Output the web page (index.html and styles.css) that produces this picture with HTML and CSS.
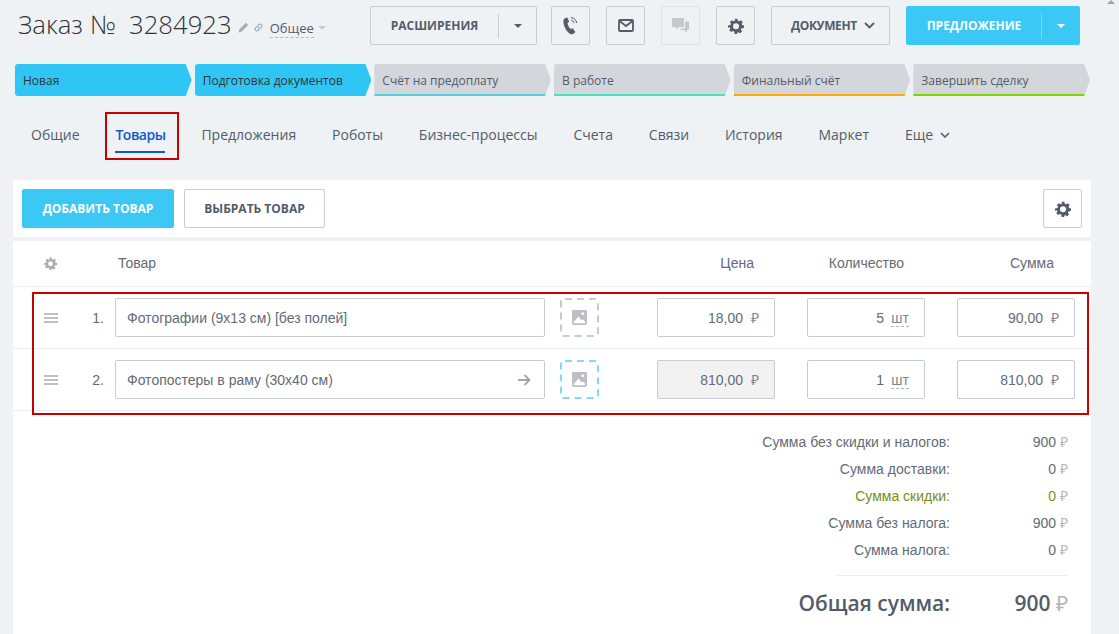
FILE: index.html
```html
<!DOCTYPE html>
<html lang="ru">

<head>
    <meta charset="UTF-8" />
    <meta name="viewport" content="width=device-width, initial-scale=1.0" />
    <title>Заказ № 3284923</title>
    <link rel="stylesheet" href="styles.css">
</head>

<body>
    <svg class="sprite" width="0" height="0">
        <symbol id="gear" viewBox="0 0 24 24">
            <path d="M10 1h4l.7 3.1 1.9.8 2.7-1.7 2.8 2.8-1.7 2.7.8 1.9L24 11.3v3.4l-3.8.9-.8 1.9 1.7 2.7-2.8 2.8-2.7-1.7-1.9.8L14 24h-4l-.7-3.8-1.9-.8-2.7 1.7-2.8-2.8 1.7-2.7-.8-1.9L0 14.7v-3.4l3.8-.7.8-1.9L2.9 6l2.8-2.8 2.7 1.7 1.9-.8zM12 8a4.500 4.500 0 1 0 0 9 4.500 4.500 0 0 0 0-9z" fill-rule="evenodd" />
        </symbol>
        <symbol id="picture" viewBox="0 0 16 16">
            <path d="M1.500 0h13A1.500 1.500 0 0 1 16 1.500v13a1.500 1.500 0 0 1-1.500 1.500h-13A1.500 1.500 0 0 1 0 14.500v-13A1.500 1.500 0 0 1 1.500 0zM11.500 2.500a1.500 1.500 0 1 0 0 3 1.500 1.500 0 0 0 0-3zM2 14h12v-1.500l-2.500-2.500-1.500 1-3-4-5 5.500z" fill-rule="evenodd" />
        </symbol>
    </svg>

    <header class="top">
        <div class="title-block">
            <h1 class="title">Заказ №&nbsp; 3284923</h1>
            <svg class="mini-icon" width="11" height="11" viewBox="0 0 11 11"><path d="M8 .8l2.200 2.200-6.700 6.700L.6 10.400l.7-2.900z" /></svg>
            <svg class="link-icon" width="11" height="11" viewBox="0 0 12 12"><path d="M5 7l2-2M4.700 4.500L6.500 2.700a2 2 0 0 1 2.800 2.800L7.500 7.300M7.300 7.500L5.500 9.300a2 2 0 0 1-2.800-2.800l1.800-1.800" /></svg>
            <span class="category">Общее</span>
            <span class="caret caret-light"></span>
        </div>
        <div class="actions">
            <button class="btn btn-split" type="button">
                <span class="btn-split-label">Расширения</span>
                <span class="btn-split-arrow"><span class="caret caret-dark"></span></span>
            </button>
            <button class="btn btn-icon" type="button">
                <svg width="18" height="20" viewBox="0 0 18 20"><path class="icon-fill" d="M2.800 2.300L5.300 1.400 7.200 5.800 5.500 7.100c.2 2 1.400 4.500 3.300 6l1.900-.8 2.700 3.600-2 1.900c-1 .8-2.500.6-3.600-.1C4.500 15.400 1.800 10.500 1.400 6c-.1-1.500.3-3 1.400-3.700z" /><path class="icon-line" d="M9 1.500c3 .3 5.300 2.500 5.700 5.500M9.200 4.300c1.500.2 2.600 1.300 2.800 2.800" /></svg>
            </button>
            <button class="btn btn-icon" type="button">
                <svg width="16" height="13" viewBox="0 0 16 13"><rect class="icon-line icon-line-thick" x="1" y="1" width="14" height="11" rx="1" /><path class="icon-line icon-line-thick" d="M1.500 2l6.500 5 6.500-5" /></svg>
            </button>
            <button class="btn btn-icon btn-off" type="button">
                <svg width="17" height="16" viewBox="0 0 17 16"><path d="M1 0h10a1 1 0 0 1 1 1v7a1 1 0 0 1-1 1H7l-3 2.500V9H1a1 1 0 0 1-1-1V1a1 1 0 0 1 1-1z" /><path d="M13 3.500h3a1 1 0 0 1 1 1V11a1 1 0 0 1-1 1h-1v3l-3-3H8l1-1.500h3a1 1 0 0 0 1-1z" /></svg>
            </button>
            <button class="btn btn-icon" type="button">
                <svg class="gear-dark" width="16" height="16"><use href="#gear" /></svg>
            </button>
            <button class="btn btn-doc" type="button">
                Документ
                <svg width="11" height="7" viewBox="0 0 11 7"><path class="icon-line icon-line-thick" d="M1 1l4.500 4.500L10 1" /></svg>
            </button>
            <button class="btn btn-primary btn-offer" type="button">
                <span class="btn-offer-label">Предложение</span>
                <span class="btn-offer-arrow"><span class="caret caret-white"></span></span>
            </button>
        </div>
    </header>

    <div class="stages">
        <div class="stage stage-done">Новая</div>
        <div class="stage stage-done">Подготовка документов</div>
        <div class="stage stage-cyan">Счёт на предоплату</div>
        <div class="stage stage-teal">В работе</div>
        <div class="stage stage-orange">Финальный счёт</div>
        <div class="stage stage-green">Завершить сделку</div>
    </div>

    <nav class="tabs">
        <a class="tab">Общие</a>
        <a class="tab tab-active">Товары<span class="mark-tab"></span></a>
        <a class="tab">Предложения</a>
        <a class="tab">Роботы</a>
        <a class="tab">Бизнес-процессы</a>
        <a class="tab">Счета</a>
        <a class="tab">Связи</a>
        <a class="tab">История</a>
        <a class="tab">Маркет</a>
        <a class="tab">Еще
            <svg class="tab-more" width="10" height="6" viewBox="0 0 10 6"><path d="M1 1l4 4 4-4" /></svg>
        </a>
    </nav>

    <section class="toolbar">
        <button class="btn btn-primary btn-add" type="button">Добавить товар</button>
        <button class="btn btn-choose" type="button">Выбрать товар</button>
        <button class="btn btn-settings" type="button">
            <svg class="gear-dark" width="16" height="16"><use href="#gear" /></svg>
        </button>
    </section>

    <section class="products">
        <div class="row row-head">
            <div class="col-handle"><svg class="gear-light" width="13" height="13"><use href="#gear" /></svg></div>
            <div class="col-num"></div>
            <div class="col-name head-name">Товар</div>
            <div class="col-pic"></div>
            <div class="col-price head-cell">Цена</div>
            <div class="col-qty head-cell">Количество</div>
            <div class="col-sum head-cell">Сумма</div>
        </div>

        <div class="lines">
            <span class="mark-lines"></span>
            <div class="row row-line">
                <div class="col-handle"><span class="handle"></span></div>
                <div class="col-num">1.</div>
                <div class="col-name field">Фотографии (9х13 см) [без полей]</div>
                <div class="col-pic">
                    <svg class="pic-box" width="39" height="39" viewBox="0 0 39 39"><rect x="1" y="1" width="37" height="37" rx="2" /></svg>
                    <svg class="pic-icon" width="15" height="15"><use href="#picture" /></svg>
                </div>
                <div class="col-price field field-num">18,00<span class="unit rub">₽</span></div>
                <div class="col-qty field field-num">5<span class="unit measure">шт</span></div>
                <div class="col-sum field field-num">90,00<span class="unit rub">₽</span></div>
            </div>
            <div class="row row-line">
                <div class="col-handle"><span class="handle"></span></div>
                <div class="col-num">2.</div>
                <div class="col-name field field-arrow">Фотопостеры в раму (30х40 см)
                    <svg width="14" height="12" viewBox="0 0 14 12"><path d="M1 6h11.500M7.500 1l5 5-5 5" /></svg>
                </div>
                <div class="col-pic">
                    <svg class="pic-box pic-box-blue" width="39" height="39" viewBox="0 0 39 39"><rect x="1" y="1" width="37" height="37" rx="2" /></svg>
                    <svg class="pic-icon" width="15" height="15"><use href="#picture" /></svg>
                </div>
                <div class="col-price field field-num field-off">810,00<span class="unit rub">₽</span></div>
                <div class="col-qty field field-num">1<span class="unit measure">шт</span></div>
                <div class="col-sum field field-num">810,00<span class="unit rub">₽</span></div>
            </div>
        </div>

        <div class="totals">
            <div class="total-row"><span class="total-label">Сумма без скидки и налогов:</span><span class="total-value">900 <i>₽</i></span></div>
            <div class="total-row"><span class="total-label">Сумма доставки:</span><span class="total-value">0 <i>₽</i></span></div>
            <div class="total-row total-discount"><span class="total-label">Сумма скидки:</span><span class="total-value">0 <i>₽</i></span></div>
            <div class="total-row"><span class="total-label">Сумма без налога:</span><span class="total-value">900 <i>₽</i></span></div>
            <div class="total-row"><span class="total-label">Сумма налога:</span><span class="total-value">0 <i>₽</i></span></div>
            <div class="total-row total-grand"><span class="total-label">Общая сумма:</span><span class="total-value">900 <i>₽</i></span></div>
        </div>
    </section>

    <div class="scroll-stub"></div>
</body>

</html>
```

FILE: styles.css
```css
* {
  box-sizing: border-box;
}

html,
body {
  height: 100%;
}

body {
  margin: 0;
  overflow: hidden;
  background-color: #eef2f4;
  color: #535c69;
  font-family: 'Open Sans', sans-serif;
  position: relative;
}

.sprite {
  position: absolute;
}

/* header */
.top {
  display: flex;
  justify-content: space-between;
  height: 45px;
  padding: 6px 39px 0 18px;
}

.title-block {
  display: flex;
  align-items: center;
  height: 38px;
}

.title {
  margin: 0 6px 0 0;
  font-size: 25.700px;
  font-weight: 300;
  color: #333;
  white-space: nowrap;
  line-height: 38px;
}

.mini-icon {
  fill: #a8adb4;
  margin-right: 4px;
  margin-top: 4px;
}

.link-icon {
  fill: none;
  stroke: #a8adb4;
  stroke-width: 1.300;
  margin-right: 6px;
  margin-top: 4px;
}

.category {
  font-size: 13px;
  line-height: 17px;
  margin-top: 7px;
  border-bottom: 1px dashed #b5bac0;
  margin-right: 4px;
}

.caret {
  display: inline-block;
  border-left: 4px solid transparent;
  border-right: 4px solid transparent;
  border-top: 4px solid #535c69;
}

.caret-light {
  border-top-color: #c6cbd0;
  margin-top: 6px;
}

.caret-white {
  border-top-color: #fff;
}

.actions {
  display: flex;
  gap: 16px;
}

.btn {
  height: 39px;
  padding: 0;
  border: 1px solid #c6cdd3;
  border-radius: 2px;
  background: transparent;
  color: #535c69;
  font-family: 'Open Sans', sans-serif;
  font-size: 12px;
  font-weight: 700;
  text-transform: uppercase;
  display: flex;
  align-items: center;
  justify-content: center;
}

.btn-split {
  width: 167px;
  margin-right: -2px;
}

.btn-split-label {
  width: 128px;
  border-right: 1px solid #c6cdd3;
  line-height: 24px;
}

.btn-split-arrow {
  flex: 1;
  display: flex;
  justify-content: center;
}

.btn-icon {
  width: 39px;
}

.btn-off {
  border-color: #dfe3e6;
}

.btn-off svg {
  fill: #c4c8cd;
}

.icon-fill {
  fill: #535c69;
}

.icon-line {
  fill: none;
  stroke: #535c69;
  stroke-width: 1;
}

.icon-line-thick {
  stroke-width: 1.800;
}

.gear-dark {
  fill: #535c69;
}

.gear-light {
  fill: #a8adb4;
}

.btn-doc {
  width: 119px;
  gap: 7px;
  padding-left: 19px;
  justify-content: flex-start;
  letter-spacing: -0.4px;
}

.btn-primary {
  background-color: #3bc8f5;
  border-color: #3bc8f5;
  color: #fff;
}

.btn-offer {
  width: 174px;
}

.btn-offer-label {
  width: 135px;
  border-right: 1px solid #7adaf8;
  line-height: 26px;
}

.btn-offer-arrow {
  flex: 1;
  display: flex;
  justify-content: center;
}

/* stages */
.stages {
  display: flex;
  gap: 3px;
  margin: 19px 0 0 15px;
  width: 1075px;
}

.stage {
  flex: 1;
  height: 32px;
  padding-left: 8px;
  background-color: #d3d6da;
  border-radius: 3px 0 0 3px;
  font-size: 12px;
  line-height: 34px;
  clip-path: polygon(0 0, calc(100% - 6px) 0, 100% 50%, calc(100% - 6px) 100%, 0 100%);
  position: relative;
}

.stage::after {
  content: "";
  position: absolute;
  left: 0;
  right: 5px;
  bottom: 0;
  height: 2px;
}

.stage-done {
  background-color: #2fc6f6;
  color: #333;
}

.stage-cyan::after {
  background-color: #55d0e0;
}

.stage-teal::after {
  background-color: #47e4c2;
}

.stage-orange::after {
  background-color: #ffa900;
}

.stage-green::after {
  background-color: #7bd500;
}

/* tabs */
.tabs {
  display: flex;
  gap: 35.900px;
  height: 84px;
  padding: 29px 0 0 31px;
}

.tab {
  font-size: 14px;
  line-height: 20px;
  white-space: nowrap;
  position: relative;
}

.tab-active {
  color: #1058d0;
  font-weight: 600;
  letter-spacing: -0.5px;
}

.tab-active::after {
  content: "";
  position: absolute;
  left: 0;
  right: 0;
  top: 26px;
  height: 2px;
  background-color: #1058d0;
}

.mark-tab {
  position: absolute;
  left: -10px;
  top: -13px;
  width: 74px;
  height: 48px;
  border: 2px solid #c90000;
}

.tab-more {
  fill: none;
  stroke: #535c69;
  stroke-width: 1.500;
  margin-left: 3px;
  vertical-align: 2px;
}

/* toolbar */
.toolbar {
  display: flex;
  align-items: center;
  gap: 10px;
  height: 57px;
  margin: 0 28px 4px 13px;
  padding: 0 9px 0 9px;
  background-color: #fff;
}

.btn-add {
  width: 152px;
}

.btn-choose {
  width: 141px;
}

.btn-settings {
  width: 39px;
  margin-left: auto;
}

/* products */
.products {
  margin: 0 28px 0 13px;
  height: 400px;
  background-color: #fff;
  color: #636b77;
  font-family: 'Liberation Sans', sans-serif;
  font-size: 14px;
}

.row {
  display: flex;
  align-items: center;
  border-bottom: 1px solid #edeef0;
}

.row-head {
  height: 46px;
  padding-bottom: 1px;
}

.row-line {
  height: 62px;
}

.col-handle {
  width: 62px;
  display: flex;
  padding-left: 31px;
}

.col-num {
  width: 29px;
  text-align: right;
  margin-right: 11px;
}

.col-name {
  width: 430px;
  margin-right: 15px;
}

.head-name {
  padding-left: 3px;
}

.col-pic {
  width: 39px;
  height: 39px;
  margin-right: 58px;
  position: relative;
  display: flex;
  align-items: center;
  justify-content: center;
}

.col-price,
.col-qty,
.col-sum {
  width: 118px;
  margin-right: 32px;
}

.col-sum {
  margin-right: 0;
}

.head-cell {
  text-align: right;
  padding-right: 21px;
}

.handle {
  width: 14px;
  height: 10px;
  border-top: 2px solid #bcc0c5;
  border-bottom: 2px solid #bcc0c5;
  position: relative;
}

.handle::after {
  content: "";
  position: absolute;
  left: 0;
  right: 0;
  top: 2px;
  height: 2px;
  background-color: #bcc0c5;
}

.lines {
  position: relative;
}

.mark-lines {
  position: absolute;
  left: 19px;
  top: 5px;
  width: 1057px;
  height: 123px;
  border: 2px solid #c90000;
  pointer-events: none;
}

.field {
  height: 39px;
  border: 1px solid #c6cdd3;
  border-radius: 2px;
  display: flex;
  align-items: center;
  padding: 0 11px;
}

.field-num {
  justify-content: flex-end;
  padding: 0 7px 0 0;
}

.field-off {
  background-color: #f2f2f3;
}

.field-arrow {
  justify-content: space-between;
  padding-right: 13px;
}

.field-arrow svg {
  fill: none;
  stroke: #a0a5ab;
  stroke-width: 1.800;
}

.unit {
  margin-left: 7px;
  min-width: 10px;
  text-align: center;
}

.rub {
  color: #80868e;
  margin-right: 7px;
}

.measure {
  color: #80868e;
  min-width: 18px;
  margin-right: 8px;
  border-bottom: 1px dashed #b5bac0;
  line-height: 16px;
  margin-top: 2px;
}

.pic-box {
  position: absolute;
  left: 0;
  top: 0;
}

.pic-box rect {
  fill: none;
  stroke: #c6cbd0;
  stroke-width: 2;
  stroke-dasharray: 7 5;
  stroke-dashoffset: -2;
}

.pic-box-blue rect {
  stroke: #7fdcfa;
}

.pic-icon {
  fill: #bcc0c5;
  position: relative;
}

/* totals */
.totals {
  padding: 18px 23px 0 0;
}

.total-row {
  display: flex;
  justify-content: flex-end;
  height: 27px;
  line-height: 27px;
}

.total-value {
  flex: none;
  width: 118px;
  text-align: right;
}

.total-value i {
  font-style: normal;
  font-weight: 400;
  color: #b3b7bc;
}

.total-discount .total-label,
.total-discount .total-value {
  color: #7f8a10;
}

.total-grand {
  width: 231px;
  margin: 11px 0 0 auto;
  padding-top: 14px;
  height: 56px;
  border-top: 1px solid #edeef0;
  color: #535c69;
  font-family: 'Open Sans', sans-serif;
  font-size: 21px;
  font-weight: 600;
  line-height: 27px;
}

.total-grand .total-label {
  flex: none;
  white-space: nowrap;
}

.scroll-stub {
  position: absolute;
  right: 1px;
  top: 0;
  width: 13px;
  height: 100%;
  background-color: #f0f1f2;
}

.scroll-stub::before {
  content: "";
  position: absolute;
  left: 2px;
  top: 0;
  border-left: 4px solid transparent;
  border-right: 4px solid transparent;
  border-bottom: 4px solid #a3a3a3;
}
```
